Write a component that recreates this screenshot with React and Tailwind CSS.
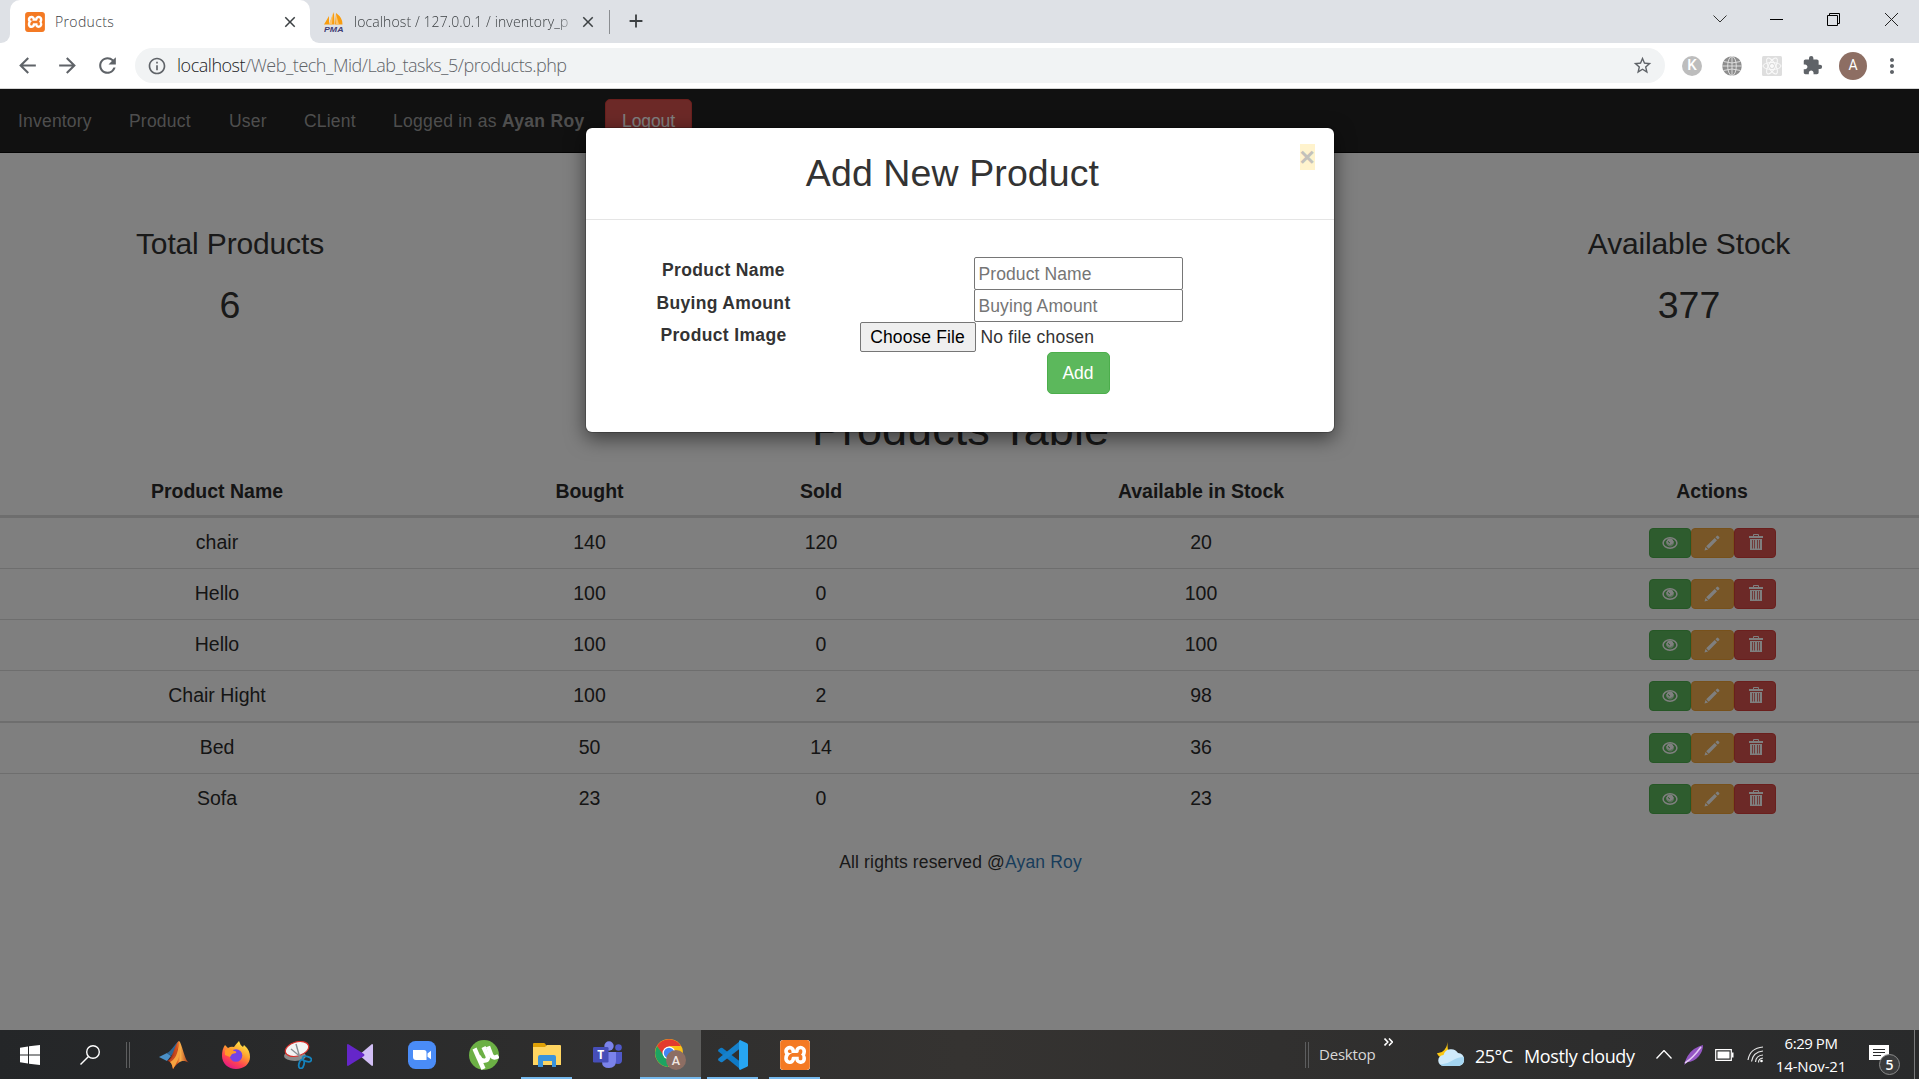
import React from "react";
import {
  MdArrowBack,
  MdArrowForward,
  MdRefresh,
  MdInfoOutline,
  MdStarBorder,
  MdExtension,
  MdMoreVert,
  MdClose,
  MdAdd,
} from "react-icons/md";
import { SiXampp } from "react-icons/si";

const rows = [
  { name: "chair", bought: 140, sold: 120, stock: 20, row: "h-[53px] border-t-[3px]" },
  { name: "Hello", bought: 100, sold: 0, stock: 100, row: "h-[51px] border-t" },
  { name: "Hello", bought: 100, sold: 0, stock: 100, row: "h-[51px] border-t" },
  { name: "Chair Hight", bought: 100, sold: 2, stock: 98, row: "h-[51px] border-t" },
  { name: "Bed", bought: 50, sold: 14, stock: 36, row: "h-[52px] border-t-2" },
  { name: "Sofa", bought: 23, sold: 0, stock: 23, row: "h-[51px] border-t" },
];

const columns = "grid grid-cols-[434px_311px_152px_608px_414px]";

function Xampp({ className }) {
  return (
    <span className={`flex overflow-hidden rounded-[3px] bg-white ${className}`}>
      <SiXampp className="h-full w-full text-[#f47a24]" />
    </span>
  );
}

function PmaIcon() {
  return (
    <svg viewBox="0 0 20 20" className="h-5 w-5 shrink-0">
      <path d="M0 12.500 5 4 5 12.500Z M5 12.500 10 0 10.500 12.500Z M11 12.500 12 1 Q19 6 18.500 12.500Z" fill="#f89c0e" />
      <path d="M5 12.500 9 1 8 12.500Z M12 12.500 12 2 15 12.500Z" fill="#fcc36a" />
      <text x="0" y="19.500" fontSize="8" fontWeight="bold" fontStyle="italic" fontFamily="Liberation Sans" fill="#3f3d75" textLength="19.500" lengthAdjust="spacingAndGlyphs">
        PMA
      </text>
    </svg>
  );
}

function BrowserChrome() {
  return (
    <header className="font-['Open_Sans',sans-serif]">
      <div className="flex h-[43px] bg-[#dee1e6] text-[14px] text-[#3c4043]">
        <div className="flex w-[10px] items-end bg-white">
          <div className="h-full w-full rounded-br-[9px] bg-[#dee1e6]" />
        </div>
        <div className="flex w-[300px] items-center rounded-t-[10px] bg-white pr-[11px] pl-[15px]">
          <Xampp className="h-5 w-5 shrink-0" />
          <span className="ml-[10px] flex-1 font-light tracking-[0.35px]">Products</span>
          <MdClose size={18} />
        </div>
        <div className="flex w-[299px] bg-white">
          <div className="flex w-full items-center rounded-bl-[9px] bg-[#dee1e6] pr-[12px] pl-[14px]">
            <PmaIcon />
            <span className="ml-[10px] w-[222px] font-light tracking-[0.1px] whitespace-nowrap [mask-image:linear-gradient(to_right,black_92%,transparent)]">
              localhost / 127.0.0.1 / inventory_p
            </span>
            <MdClose size={18} className="ml-auto shrink-0" />
          </div>
        </div>
        <div className="mt-[10px] h-6 w-px bg-[#8a8d91]" />
        <MdAdd size={22} className="mt-[10px] ml-[15px]" />
        <div className="mt-[3px] ml-auto flex h-8 items-center text-black">
          <svg viewBox="0 0 14 8" className="mr-[43px] h-2 w-[14px]" fill="none" stroke="#333">
            <path d="M.5.5 7 7 13.5.5" />
          </svg>
          <div className="mr-[44px] h-px w-[13px] bg-black" />
          <svg viewBox="0 0 13 13" className="mr-[45px] h-[13px] w-[13px]" fill="none" stroke="#000">
            <path d="M.5 2.5h10v10H.5zM2.5 2.5v-2h10v10h-2" />
          </svg>
          <svg viewBox="0 0 13 13" className="mr-[21px] h-[13px] w-[13px]" fill="none" stroke="#222">
            <path d="m0 0 13 13M13 0 0 13" />
          </svg>
        </div>
      </div>
      <div className="flex h-[46px] items-center border-b border-[#d5d5d5] bg-white pr-[14px] pl-[15px] text-[#5f6368]">
        <MdArrowBack size={25} className="shrink-0" />
        <MdArrowForward size={25} className="ml-[15px] shrink-0" />
        <MdRefresh size={25} className="ml-[15px] shrink-0" />
        <div className="ml-[15px] flex h-[35px] w-[1530px] shrink-0 items-center rounded-full bg-[#f1f3f4] pr-3 pl-3">
          <MdInfoOutline size={20} />
          <span className="ml-[10px] text-[18px] font-light tracking-[-0.48px] text-[#5f6368]">
            <span className="text-[#202124]">localhost</span>/Web_tech_Mid/Lab_tasks_5/products.php
          </span>
          <MdStarBorder size={21} className="ml-auto" />
        </div>
        <div className="ml-[17px] flex h-5 w-5 items-center justify-center rounded-full bg-[#bdbdbd] font-['Roboto',sans-serif] text-[15px] font-medium text-white">
          K
        </div>
        <svg viewBox="0 0 20 20" className="ml-5 h-5 w-5" fill="none" stroke="#e4e4e4" strokeWidth=".9">
          <circle cx="10" cy="10" r="9.8" fill="#8d8d8d" stroke="none" />
          <ellipse cx="10" cy="10" rx="4.3" ry="9.6" />
          <path d="M10 0v20M0 10h20M1.5 5.5q8.500 3 17 0M1.500 14.500q8.500-3 17 0" />
        </svg>
        <svg viewBox="0 0 20 20" className="ml-5 h-5 w-5" fill="none" stroke="#fafafa" strokeWidth="1">
          <rect width="20" height="20" rx="1.500" fill="#dedede" stroke="none" />
          <ellipse cx="10" cy="10" rx="9" ry="3.500" />
          <ellipse cx="10" cy="10" rx="9" ry="3.500" transform="rotate(60 10 10)" />
          <ellipse cx="10" cy="10" rx="9" ry="3.500" transform="rotate(120 10 10)" />
          <circle cx="10" cy="10" r="1.500" fill="#fafafa" />
        </svg>
        <MdExtension size={21} className="ml-[20px]" />
        <div className="ml-[16px] flex h-7 w-7 items-center justify-center rounded-full bg-[#8d6e63] font-['Roboto',sans-serif] text-[14px] text-white">
          A
        </div>
        <MdMoreVert size={24} className="ml-[13px] shrink-0" />
      </div>
    </header>
  );
}

function EyeIcon() {
  return (
    <svg viewBox="0 0 16 14" className="mt-[-1px] ml-px h-[14px] w-4">
      <ellipse cx="8" cy="7" rx="6.900" ry="5.200" fill="none" stroke="#fff" strokeWidth="1.500" />
      <circle cx="8" cy="5.700" r="3.200" fill="#fff" />
      <path d="M4.600 5q-.4 4.600 3.400 4.900T11.400 5" fill="none" stroke="#fff" strokeWidth=".8" />
      <path d="M6.300 5.200q.200 1.700 1.700 1.700" fill="none" stroke="#5cb85c" strokeWidth="1" />
    </svg>
  );
}

function PencilIcon() {
  return (
    <svg viewBox="0 0 16 16" className="h-4 w-4" fill="#fff">
      <path d="m.5 15.500 1-3.600 2.600 2.600zM2.200 11.200 10.700 3l2.300 2.300-8.300 8.400zM11.500 2.200l1.300-1.300q.700-.600 1.400 0l1 1q.600.700 0 1.400L13.800 4.600z" />
    </svg>
  );
}

function TrashIcon() {
  return (
    <svg viewBox="0 0 14 16" className="mt-[-3px] ml-[2px] h-4 w-[14px]">
      <path d="M4.500 2V.500h5V2" fill="none" stroke="#fff" />
      <path d="M0 2h14v2H0zM1 5h12v11H1z" fill="#fff" />
      <path d="M3.500 6v8.500M5.500 6v8.500M8.500 6v8.500M10.500 6v8.500" stroke="#d9534f" strokeWidth=".8" />
    </svg>
  );
}

function ActionButtons() {
  const base = "flex h-[30px] items-center justify-center rounded-[4px] border";
  return (
    <div className="mt-[10px] flex justify-center">
      <button className={`${base} w-[42px] border-[#4cae4c] bg-[#5cb85c]`}><EyeIcon /></button>
      <button className={`${base} w-[43px] border-[#eea236] bg-[#f0ad4e]`}><PencilIcon /></button>
      <button className={`${base} w-[42px] border-[#d43f3a] bg-[#d9534f]`}><TrashIcon /></button>
    </div>
  );
}

function Stat({ label, value, className = "" }) {
  return (
    <div className={`w-[460px] text-center ${className}`}>
      <h3 className="text-[30px] leading-[33px] tracking-[-0.15px]">{label}</h3>
      <h2 className="mt-[25px] text-[37.5px] leading-[41px]">{value}</h2>
    </div>
  );
}

function ProductsPage() {
  return (
    <div className="h-full bg-white text-[#333]">
      <nav className="flex h-16 border-b border-[#080808] bg-[#222] pl-[18px] text-[17.5px] leading-[64px] tracking-[0.2px] text-[#9d9d9d]">
        <a className="w-[111px]">Inventory</a>
        <a className="w-[100px]">Product</a>
        <a className="w-[75px]">User</a>
        <a className="w-[89px]">CLient</a>
        <span className="w-[212px] tracking-[0.3px]">Logged in as <b>Ayan Roy</b></span>
        <button className="mt-[10px] flex h-[43px] w-[87px] items-center justify-center rounded-[5px] border border-[#d43f3a] bg-[#d9534f] pt-px tracking-[-0.1px] text-white">
          Logout
        </button>
      </nav>
      <section className="flex justify-between pt-[74px]">
        <Stat label="Total Products" value="6" />
        <Stat label="Available Stock" value="377" />
      </section>
      <h1 className="mt-[79px] pl-[2px] text-center text-[45px] leading-[50px]">Products Table</h1>
      <div className="mt-[10px] text-center text-[19.5px] text-[#2b2b2b]">
        <div className={`${columns} h-[50px] leading-[52px] font-bold`}>
          <div>Product Name</div>
          <div>Bought</div>
          <div>Sold</div>
          <div>Available in Stock</div>
          <div>Actions</div>
        </div>
        {rows.map((r, i) => (
          <div key={i} className={`${columns} border-[#ddd] leading-[49px] ${r.row}`}>
            <div>{r.name}</div>
            <div>{r.bought}</div>
            <div>{r.sold}</div>
            <div>{r.stock}</div>
            <ActionButtons />
          </div>
        ))}
      </div>
      <footer className="mt-[26px] pl-[2px] text-center text-[17.5px] leading-[25px] tracking-[0.15px]">
        All rights reserved @<a className="text-[#337ab7]">Ayan Roy</a>
      </footer>
    </div>
  );
}

function AddProductModal() {
  const row = "grid grid-cols-[273px_1fr]";
  const label = "pl-[3px] text-center font-bold tracking-[0.35px]";
  const input =
    "ml-[115px] block h-[33px] w-[209px] rounded-[2px] border-[1.5px] border-[#767676] bg-white px-[4px] pt-[2px] text-[17.5px] tracking-[0.1px] placeholder:text-[#757575]";
  return (
    <div className="mt-[38px] h-[306px] w-[750px] rounded-[7px] border border-black/20 bg-white bg-clip-padding text-[17.5px] text-[#333] shadow-[0_6px_19px_rgba(0,0,0,0.5)]">
      <div className="relative h-[92px] border-b border-[#e5e5e5] pt-[25px]">
        <h2 className="pr-[14px] text-center text-[37.5px] leading-[41px] tracking-[0.1px]">Add New Product</h2>
        <button className="absolute top-4 right-[19px] flex h-[26px] w-[15px] items-center justify-center bg-[#fff3cd] text-[26px] leading-none font-bold text-[#c3c1bb]">
          ×
        </button>
      </div>
      <form className="pt-[37px]">
        <div className={`${row} h-[32px]`}>
          <label className={`${label} leading-[26px]`}>Product Name</label>
          <div><input placeholder="Product Name" className={input} /></div>
        </div>
        <div className={`${row} h-[33px]`}>
          <label className={`${label} leading-[28px]`}>Buying Amount</label>
          <div><input placeholder="Buying Amount" className={input} /></div>
        </div>
        <div className={`${row} h-[30px]`}>
          <label className={`${label} leading-[26px]`}>Product Image</label>
          <div className="flex items-center">
            <button type="button" className="ml-px h-[30px] w-[116px] rounded-[2px] border-[1.5px] border-[#767676] bg-[#efefef] tracking-[0.1px] text-black">
              Choose File
            </button>
            <span className="ml-[5px] tracking-[0.2px]">No file chosen</span>
          </div>
        </div>
        <div className={row}>
          <button type="button" className="col-start-2 ml-[188px] h-[42px] w-[63px] rounded-[5px] border border-[#4cae4c] bg-[#5cb85c] text-white">
            Add
          </button>
        </div>
      </form>
    </div>
  );
}

function Matlab() {
  return (
    <svg viewBox="0 0 30 28" className="h-7 w-[30px]">
      <defs>
        <linearGradient id="mb" x1="0" x2="1">
          <stop offset="0" stopColor="#7a1b12" />
          <stop offset=".45" stopColor="#d6501f" />
          <stop offset=".6" stopColor="#f9b04a" />
          <stop offset="1" stopColor="#a32a16" />
        </linearGradient>
      </defs>
      <path d="M0 16 8 12 12 15 8 20z" fill="#4a90c8" />
      <path d="M8 12C13 10 16 2 20 0 18 8 15 13 12 15z" fill="#2d6597" />
      <path d="M8 20C14 18 16 2 20 0 23 2 25 18 30 22 24 18 20 20 14 28 13 22 11 20 8 20z" fill="url(#mb)" />
      <path d="M20 0c-1 9-5 17-11 20 3 0 4 3 5 8 5-7 5-17 6-28z" fill="#c64a20" />
      <path d="M20 3c2 5 2 13-6 25-1-5-2-6-3-7 5-2 8-9 9-18z" fill="#f6a340" />
    </svg>
  );
}

function Firefox() {
  return (
    <svg viewBox="0 0 28 28" className="h-7 w-7">
      <defs>
        <linearGradient id="ff" x1=".8" y1="0" x2=".25" y2="1">
          <stop offset="0" stopColor="#fff44f" />
          <stop offset=".4" stopColor="#ffa22e" />
          <stop offset=".7" stopColor="#ff4550" />
          <stop offset="1" stopColor="#e0138b" />
        </linearGradient>
      </defs>
      <path d="M3 4 6 7Q9 5 12 6 14 3 17 0 18 4 21 6L22 4Q28 9 28 16C28 23 22 28 14 28S0 22 0 15Q0 8 3 4z" fill="url(#ff)" />
      <circle cx="14" cy="14.500" r="6.300" fill="#7542e5" />
      <path d="M3 9q5-3 9 1 3 0 2 2l-4 1-2 3-5-2z" fill="#ff9a28" />
    </svg>
  );
}

function Snip() {
  return (
    <svg viewBox="0 0 28 28" className="h-7 w-7" fill="none">
      <ellipse cx="11" cy="15" rx="11" ry="5" fill="#8b8b8b" />
      <ellipse cx="13" cy="8" rx="12" ry="7" transform="rotate(-16 13 8)" fill="#f3f3f3" stroke="#d9302b" strokeWidth="1.200" />
      <path d="m12 3 4 14M7 8l11 9" stroke="#8a8f94" strokeWidth="1.400" />
      <ellipse cx="23" cy="18" rx="4.500" ry="2.500" transform="rotate(15 23 18)" stroke="#1583bd" strokeWidth="1.800" />
      <ellipse cx="17.500" cy="23" rx="2.500" ry="4.500" transform="rotate(15 17.500 23)" stroke="#1583bd" strokeWidth="1.800" />
    </svg>
  );
}

function MediaBowtie() {
  return (
    <svg viewBox="0 0 26 22" className="h-[22px] w-[26px]">
      <path d="M25 0q1 0 1 1v20q0 1-1 1L12 11z" fill="#d2bff5" />
      <path d="M1 0 17 10q1 1 0 2L1 22q-1 0-1-1V1q0-1 1-1z" fill="#6526c9" />
    </svg>
  );
}

function ZoomApp() {
  return (
    <svg viewBox="0 0 28 28" className="h-7 w-7">
      <rect width="28" height="28" rx="7.500" fill="#4a8cf7" />
      <path d="M5 9h11q2.500 0 2.500 2.500V19H8q-3 0-3-3zM19.500 12.500 23 9.700V18.300l-3.500-2.500z" fill="#fff" />
    </svg>
  );
}

function Utorrent() {
  return (
    <svg viewBox="0 0 30 30" className="h-[30px] w-[30px]">
      <circle cx="15" cy="15" r="15" fill="#6cb045" />
      <g fill="none" stroke="#fff" strokeWidth="4.400">
        <path d="M5.500 8.500 14.500 29" />
        <path d="M9.500 16q2.500 6 7 4.500T17 12.500L14.500 7" />
        <path d="M19 6.500 22 14.500q2 5 7.500 1.500" />
      </g>
    </svg>
  );
}

function Explorer() {
  return (
    <svg viewBox="0 0 28 24" className="h-6 w-7">
      <path d="M0 1q0-1 1-1h10q1 0 2 2l1 1v4H0z" fill="#e0a106" />
      <path d="M0 4h12l2-2h13q1 0 1 1v19H0z" fill="#ffd561" />
      <path d="M5 24V14q0-2 2-2h14q2 0 2 2v10h-4v-6h-9v6z" fill="#3a93dc" />
    </svg>
  );
}

function Teams() {
  return (
    <svg viewBox="0 0 30 28" className="h-7 w-[30px]">
      <circle cx="16" cy="5" r="4.700" fill="#7b83eb" />
      <circle cx="25.500" cy="6.500" r="3.300" fill="#5059c9" />
      <path d="M21 11h8v8q0 4-4 4t-4-3z" fill="#5059c9" />
      <path d="M9 11h14v9q0 7-7 7t-7-6z" fill="#7b83eb" />
      <rect y="6" width="15.500" height="15.500" rx="1.300" fill="#464eb8" />
      <text x="7.800" y="18" fill="#fff" textAnchor="middle" fontSize="12" fontWeight="bold" fontFamily="Open Sans">T</text>
    </svg>
  );
}

function ChromeIcon() {
  return (
    <svg viewBox="0 0 31 31" className="h-[31px] w-[31px]">
      <circle cx="14" cy="14" r="14" fill="#fbc116" />
      <path d="M2 7A14 14 0 0 1 26 7H14L8 17z" fill="#e33b2e" />
      <path d="M2 7A14 14 0 0 0 13 28L19 18 9 17z" fill="#1da462" />
      <circle cx="14" cy="14" r="6.500" fill="#fff" />
      <circle cx="14" cy="14" r="5.200" fill="#4285f4" />
      <circle cx="21" cy="21" r="10" fill="#8d6e63" />
      <text x="21" y="26" fill="#f0e6e2" textAnchor="middle" fontSize="12.500" fontWeight="500" fontFamily="Roboto">A</text>
    </svg>
  );
}

function VsCode() {
  return (
    <svg viewBox="0 0 30 30" className="h-[30px] w-[30px]">
      <path d="M2.500 8 .500 9.500q-.800 1 0 2L22 29V21.500L4.500 8q-1-.700-2 0z" fill="#0f7ac6" />
      <path d="M2.500 22 .500 20.500q-.800-1 0-2L22 1V8.500L4.500 22q-1 .700-2 0z" fill="#1681cc" />
      <path d="M22 0 29 3.300q1 .500 1 1.500v20.400q0 1-1 1.500L22 30 21 29V1z" fill="#27a5f2" />
    </svg>
  );
}

function AppTile({ width, underline, active, children }) {
  return (
    <div className={`relative flex h-full items-center justify-center ${width} ${active ? "bg-[#5d5d5c]" : ""}`}>
      {children}
      {underline && <div className="absolute inset-x-0 bottom-0 h-[2px] bg-[#76b9ed]" />}
    </div>
  );
}

function Separator({ className }) {
  return <div className={`h-[26px] w-[4px] border-x border-[#5d5e5f] ${className}`} />;
}

function Taskbar() {
  return (
    <div className="flex h-[49px] items-center bg-linear-to-r from-[#242628] via-[#353331] to-[#292a2b] font-['Open_Sans',sans-serif] text-white">
      <svg viewBox="0 0 20 20" className="ml-5 h-5 w-5" fill="#fff">
        <path d="M0 2.800 8 1.500V9.500H0zM9 1.300 20 0v9.500H9zM0 10.500h8v8L0 17.200zM9 10.500h11V20L9 18.700z" />
      </svg>
      <svg viewBox="0 0 20 20" className="ml-10 h-5 w-5" fill="none" stroke="#fff" strokeWidth="1.400">
        <circle cx="13" cy="7" r="6.300" />
        <path d="M8.500 11.500.5 19.500" />
      </svg>
      <Separator className="ml-[26px]" />
      <div className="ml-[13px] flex h-full">
        <AppTile width="w-[61px]"><Matlab /></AppTile>
        <AppTile width="w-[63px]"><Firefox /></AppTile>
        <AppTile width="w-[62px]"><Snip /></AppTile>
        <AppTile width="w-[62px]"><MediaBowtie /></AppTile>
        <AppTile width="w-[62px]"><ZoomApp /></AppTile>
        <AppTile width="w-[62px]"><Utorrent /></AppTile>
        <AppTile width="ml-[6px] w-[51px]" underline><Explorer /></AppTile>
        <AppTile width="ml-[5px] w-[61px]"><Teams /></AppTile>
        <AppTile width="ml-[2px] w-[61px]" underline active><ChromeIcon /></AppTile>
        <AppTile width="ml-[6px] w-[51px]" underline><VsCode /></AppTile>
        <AppTile width="ml-[11px] w-[51px]" underline><Xampp className="h-[30px] w-[30px]" /></AppTile>
      </div>
      <Separator className="ml-auto" />
      <span className="ml-[10px] w-[65px] text-[15px] tracking-[-0.2px] text-[#d8d8d8]">Desktop</span>
      <svg viewBox="0 0 9 8" className="mt-[-26px] h-2 w-[9px]" fill="none" stroke="#fff" strokeWidth="1.600">
        <path d="m.5.5 3.300 3.500L.5 7.500M5 .5 8.300 4 5 7.500" />
      </svg>
      <svg viewBox="0 0 28 25" className="ml-[44px] h-[25px] w-7">
        <path d="M11 0q-2 7 3 12l-8 4Q1 15 0 11q8 1 11-11z" fill="#fbc712" />
        <path d="M7 24a5.500 5.500 0 0 1-.5-11 8 8 0 0 1 14.500-2 6.600 6.600 0 0 1 1 13z" fill="#cfeafa" />
        <path d="M7 24q-3 0-4.500-2 6 1 12-3t12.500-4q1 7-5 9z" fill="#a5d6f2" />
      </svg>
      <span className="mt-[3px] ml-[10px] w-[49px] text-[18px] tracking-[-0.5px]">25°C</span>
      <span className="mt-[3px] w-[132px] text-[18px] tracking-[-0.36px] whitespace-nowrap">Mostly cloudy</span>
      <svg viewBox="0 0 16 9" className="h-[9px] w-4" fill="none" stroke="#fff" strokeWidth="1.300">
        <path d="m.5 8.500 7.500-8 7.500 8" />
      </svg>
      <svg viewBox="0 0 20 20" className="ml-[12px] h-5 w-5">
        <path d="M0 20Q3 9 10 4 15 1 19 0q0 6-4 11-5 6-12 6z" fill="#9456c4" />
        <path d="M1 18Q9 13 17 2" stroke="#e3c8f4" strokeWidth="1.500" fill="none" />
      </svg>
      <svg viewBox="0 0 19 12" className="ml-[11px] h-3 w-[19px]">
        <path d="M.7.700h15.600v10.600H.7z" fill="none" stroke="#fff" strokeWidth="1.200" />
        <path d="M2.500 2.500h12v7h-12zM17 3.500h1.500v5H17z" fill="#fff" />
      </svg>
      <svg viewBox="0 0 17 17" className="ml-[13px] h-[17px] w-[17px]" fill="none" stroke="#e6e6e6" strokeWidth="1.200">
        <path d="M1 14Q3 2 16 1M4.500 15.500Q6 6 16 5M8.500 16Q9 9.500 16 9M11.500 16.500q0-4 4.500-4.500" />
        <circle cx="14.500" cy="15" r="1.300" fill="#fff" stroke="none" />
      </svg>
      <div className="ml-[3px] w-[88px] text-center text-[15px] leading-[23px]">
        <div className="tracking-[-0.45px]">6:29 PM</div>
        <div className="tracking-[-0.15px]">14-Nov-21</div>
      </div>
      <div className="relative ml-[14px] h-[19px] w-5">
        <svg viewBox="0 0 20 19" className="h-[19px] w-5">
          <path d="M0 0h20v15h-4l-4 4v-4H0z" fill="#fff" />
          <path d="M4 4.500h12M4 7.500h12M4 10.500h8" stroke="#292a2b" strokeWidth="1.200" />
        </svg>
        <div className="absolute top-[9px] left-[10px] flex h-[21px] w-[21px] items-center justify-center rounded-full border border-[#8b8b8b] bg-[#3b3c3d] text-[14px] font-semibold">
          5
        </div>
      </div>
      <div className="ml-[25px] h-full w-px bg-[#7a7b7c]" />
      <div className="w-1" />
    </div>
  );
}

export default function App() {
  return (
    <div className="flex h-[1079px] w-[1919px] flex-col overflow-hidden font-['Liberation_Sans',sans-serif]">
      <BrowserChrome />
      <main className="relative h-[941px]">
        <ProductsPage />
        <div className="absolute inset-0 flex items-start justify-center bg-black/50">
          <AddProductModal />
        </div>
      </main>
      <Taskbar />
    </div>
  );
}
